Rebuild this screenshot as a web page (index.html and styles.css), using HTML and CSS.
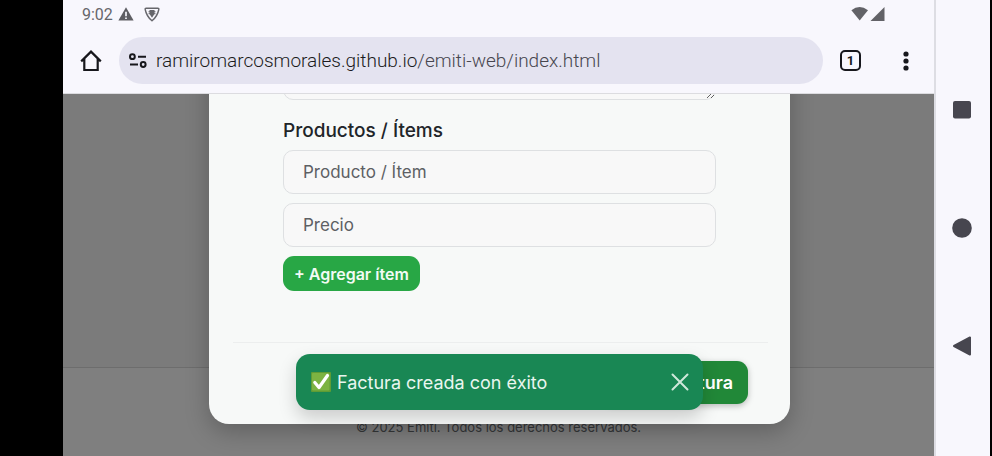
FILE: index.html
```html
<!DOCTYPE html>
<html lang="es">
<head>
<meta charset="utf-8">
<meta name="viewport" content="width=device-width, initial-scale=1">
<title>Emiti</title>
<link rel="stylesheet" href="styles.css">
</head>
<body>
<div class="device">
  <div class="browser">
    <header class="chrome">
      <div class="status">
        <span class="clock">9:02</span>
        <svg class="status-warning" width="16" height="14" viewBox="0 0 16 14" aria-hidden="true"><path d="M8 .3 15.6 13.5H.4z" fill="#5e5e63"/><path d="M8 4.8v4.4M8 10.4v1.7" stroke="#f7f7fd" stroke-width="1.7"/></svg>
        <svg class="status-shield" width="16" height="15" viewBox="0 0 16 15" aria-hidden="true"><path d="M2.200 1.200h11.600q1.300 0 1 1.300Q13.400 9.500 8 13.800 2.600 9.500 1.200 2.500q-.3-1.300 1-1.300z" fill="none" stroke="#66666b" stroke-width="1.400"/><path d="M5.500 3h5v1.300h1v1h-1v1h1v1h-1.200L8 10.800 5.700 7.300H4.500v-1h1v-1h-1v-1h1z" fill="#66666b"/></svg>
        <svg class="signal" width="34" height="16" viewBox="0 0 34 16" aria-hidden="true"><path d="M.4 4.200Q8.500-2.200 17 4.200L8.700 14.500z" fill="#626267"/><path d="M33.500 1v14H19.500z" fill="#626267"/></svg>
      </div>
      <div class="toolbar">
        <button class="icon-button" type="button" aria-label="Inicio">
          <svg width="22" height="22" viewBox="0 0 22 22"><path d="M1.200 11.400 11 1.600l9.800 9.800M4.300 9v11h13.400V9" fill="none" stroke="#17171c" stroke-width="2.200"/></svg>
        </button>
        <div class="address">
          <svg width="18" height="16" viewBox="0 0 18 16" fill="none" stroke="#17171c" stroke-width="2" aria-hidden="true"><circle cx="3.400" cy="3.700" r="2.400"/><path d="M9 3.700h8M1 11.500h8"/><circle cx="14.200" cy="11.500" r="2.400"/></svg>
          <span class="url">ramiromarcosmorales.github.io<span class="url-path">/emiti-web/index.html</span></span>
        </div>
        <button class="tabs" type="button" aria-label="Pestañas">1</button>
        <button class="icon-button" type="button" aria-label="Menú">
          <svg width="6" height="20" viewBox="0 0 6 20" fill="#17171c"><circle cx="3" cy="3" r="2.600"/><circle cx="3" cy="10" r="2.600"/><circle cx="3" cy="17" r="2.600"/></svg>
        </button>
      </div>
    </header>

    <div class="viewport">
      <div class="page">
        <div class="page-content"></div>
        <footer class="page-footer">© 2025 Emiti. Todos los derechos reservados.</footer>
      </div>

      <div class="overlay">
        <form class="modal">
          <div class="modal-body">
            <textarea class="field notes" aria-label="Descripción"></textarea>
            <h2>Productos / Ítems</h2>
            <input class="field" type="text" placeholder="Producto / Ítem" aria-label="Producto / Ítem">
            <input class="field" type="text" placeholder="Precio" aria-label="Precio">
            <button class="add" type="button">+ Agregar ítem</button>
          </div>
          <div class="modal-footer">
            <button class="submit" type="submit">Crear factura</button>
          </div>
        </form>
      </div>

      <div class="toast" role="status">
        <svg width="20" height="20" viewBox="0 0 20 20" aria-hidden="true"><rect width="20" height="20" rx="1" fill="#5f9c35"/><rect x="1" y="1" width="17.500" height="17.500" rx="1" fill="#7cb342"/><path d="m3.800 10.500 4.200 5L16.500 3.500" fill="none" stroke="#fff" stroke-width="3.200" stroke-linecap="round" stroke-linejoin="round"/></svg>
        <span class="toast-text">Factura creada con éxito</span>
        <button class="close" type="button" aria-label="Cerrar">
          <svg width="18" height="18" viewBox="0 0 18 18"><path d="m1.500 1.500 15 15m0-15-15 15" stroke="#cfe8da" stroke-width="2" stroke-linecap="round"/></svg>
        </button>
      </div>
    </div>
  </div>

  <nav class="system-nav" aria-label="Sistema">
    <button type="button" aria-label="Recientes"><svg width="20" height="20" viewBox="0 0 20 20" fill="#47464f"><rect x="1" y="1" width="18" height="17.500" rx="2"/></svg></button>
    <button type="button" aria-label="Inicio del sistema"><svg width="20" height="20" viewBox="0 0 20 20" fill="#47464f"><circle cx="10" cy="10" r="9.800"/></svg></button>
    <button type="button" aria-label="Atrás"><svg width="20" height="20" viewBox="0 0 20 20" fill="#47464f" stroke="#47464f" stroke-width="2" stroke-linejoin="round"><path d="M2 10 18 1.500v17z"/></svg></button>
  </nav>
</div>
</body>
</html>
```
FILE: styles.css
```css
* {
  box-sizing: border-box;
}

body {
  margin: 0;
  font-family: Inter, "Liberation Sans", sans-serif;
  color: #212529;
}

button {
  padding: 0;
  border: 0;
  background: none;
  color: inherit;
  font: inherit;
}

svg {
  display: block;
  flex: none;
}

.device {
  display: flex;
  height: 100vh;
  padding: 0 2px 0 63px;
  background: #000;
}

.browser {
  display: flex;
  flex: 1;
  flex-direction: column;
  min-width: 0;
}

/* Browser chrome */
.chrome {
  padding-bottom: 9px;
  border-bottom: 1px solid #dcdce0;
  background: #f8f7fd;
  font-family: Roboto, sans-serif;
}

.status {
  display: flex;
  align-items: center;
  height: 28px;
  padding: 0 49px 0 19px;
}

.clock {
  color: #66666b;
  font-size: 16px;
}

.status-warning {
  margin-left: 5px;
}

.status-shield {
  margin-left: 10px;
}

.signal {
  margin-left: auto;
}

.toolbar {
  display: flex;
  align-items: center;
  padding-top: 9px;
}

.icon-button {
  display: grid;
  place-items: center;
  width: 56px;
  height: 46px;
}

.address {
  display: flex;
  flex: 1;
  align-items: center;
  gap: 9px;
  min-width: 0;
  height: 47px;
  padding: 0 10px;
  border-radius: 24px;
  background: #e4e3f0;
}

.url {
  overflow: hidden;
  color: #1b1b21;
  font-size: 19px;
  font-weight: 300;
  white-space: nowrap;
}

.url-path {
  color: #47464f;
}

.tabs {
  width: 21px;
  height: 21px;
  margin: 0 17px;
  border: 2px solid #17171c;
  border-radius: 5px;
  color: #17171c;
  font-size: 13px;
  font-weight: 700;
  line-height: 17px;
}

/* Page behind the dialog */
.viewport {
  position: relative;
  flex: 1;
  min-height: 0;
  overflow: hidden;
}

.page {
  display: flex;
  flex-direction: column;
  height: 100%;
  background: #7b7b7b;
}

.page-content {
  flex: 1;
}

.page-footer {
  padding: 49px 0 19px;
  border-top: 1px solid #6d6d6d;
  background: #7f7f7f;
  color: #36383a;
  font-size: 13px;
  line-height: 20px;
  text-align: center;
}

/* Dialog */
.overlay {
  position: absolute;
  inset: 0;
  display: flex;
  flex-direction: column;
  justify-content: flex-end;
  padding: 0 144px 32px 146px;
}

.modal {
  border-radius: 20px;
  background: #f7f9f8;
  box-shadow: 0 8px 24px rgba(0, 0, 0, 0.24);
}

.modal-body {
  display: flex;
  flex-direction: column;
  gap: 9px;
  padding: 24px 74px 51px;
}

.field {
  width: 100%;
  height: 44px;
  padding: 0 19px;
  border: 1px solid #dee0e2;
  border-radius: 10px;
  background: #f8f8f8;
  color: #212529;
  font-family: inherit;
  font-size: 17px;
}

.field::placeholder {
  color: #5d6064;
  opacity: 1;
}

.notes {
  height: 88px;
  resize: vertical;
}

h2 {
  margin: 12px 0 0;
  font-size: 19px;
  font-weight: 550;
  line-height: 20px;
}

.add {
  align-self: flex-start;
  height: 35px;
  padding: 0 11px;
  border-radius: 11px;
  background: #28a745;
  color: #f2fbf4;
  font-size: 16px;
  font-weight: 600;
}

.modal-footer {
  display: flex;
  justify-content: flex-end;
  margin: 0 22px 0 24px;
  padding: 18px 20px 20px;
  border-top: 1px solid #eceeee;
}

.submit {
  height: 43px;
  padding: 0 15px;
  border-radius: 11px;
  background: #218838;
  box-shadow: 0 2px 6px rgba(0, 0, 0, 0.25);
  color: #fff;
  font-size: 18px;
  font-weight: 600;
}

/* Notification */
.toast {
  position: absolute;
  right: 231px;
  bottom: 46px;
  left: 233px;
  display: flex;
  align-items: center;
  height: 56px;
  padding: 0 14px 0 15px;
  border-radius: 14px;
  background: #198754;
  box-shadow: 0 8px 18px rgba(0, 0, 0, 0.18);
  color: #e9f6ef;
  font-size: 18px;
}

.toast-text {
  margin-left: 6px;
}

.close {
  margin-left: auto;
}

/* System navigation */
.system-nav {
  display: flex;
  flex-direction: column;
  align-items: center;
  justify-content: space-between;
  width: 56px;
  padding: 100px 2px 100px 0;
  border-left: 2px solid #dddde3;
  background: #f8f7fd;
}
```
